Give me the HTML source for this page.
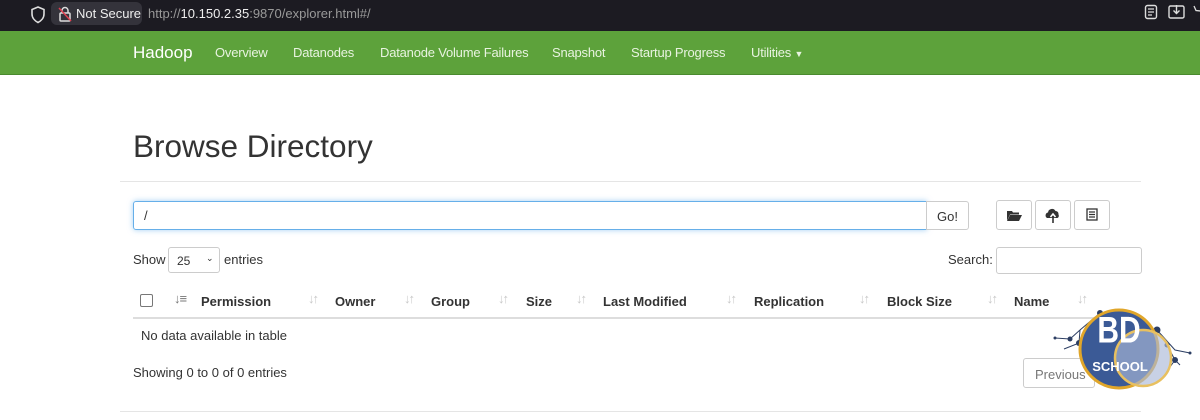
<!DOCTYPE html>
<html><head><style>
*{box-sizing:border-box;margin:0;padding:0}
body{width:1200px;height:420px;overflow:hidden;background:#fff;font-family:"Liberation Sans",Arial,sans-serif;font-size:13px;color:#333;position:relative}
.abs{position:absolute}
.bar{left:0;top:0;width:1200px;height:31px;background:#1c1b22}
.nav{left:0;top:31px;width:1200px;height:44px;background:#5da23b;border-bottom:1px solid #4a8a2e}
.nav span{position:absolute;top:14px;color:#e8f3e0;font-size:13px;letter-spacing:-0.2px}
.btn{border:1px solid #ccc;border-radius:3px;background:#fff}
.h{font-weight:bold;top:294px;font-size:13px;color:#333}
.s{top:291px;color:#c8c8c8;font-size:13px;font-weight:bold;letter-spacing:-2px}
</style></head><body>
<div class="abs bar"></div>
<svg class="abs" style="left:30px;top:6px" width="16" height="18" viewBox="0 0 16 18"><path d="M8 1 L14 3.5 V8 C14 12 11 15 8 16.5 C5 15 2 12 2 8 V3.5Z" fill="none" stroke="#ddd" stroke-width="1.6"/></svg>
<div class="abs" style="left:51px;top:2px;width:91px;height:23px;background:#34333b;border-radius:6px"></div>
<svg class="abs" style="left:58px;top:6px" width="14" height="16" viewBox="0 0 14 16"><rect x="2" y="7" width="10" height="8" rx="1" fill="none" stroke="#ddd" stroke-width="1.5"/><path d="M4 7V4.5a3 3 0 0 1 6 0V7" fill="none" stroke="#ddd" stroke-width="1.5"/><path d="M1 2 L13 15" stroke="#e04050" stroke-width="1.5"/></svg>
<div class="abs" style="left:76px;top:6px;color:#eee;font-size:13px">Not Secure</div>
<div class="abs" style="left:148px;top:6px;color:#999;font-size:13px">http://<span style="color:#eee">10.150.2.35</span>:9870/explorer.html#/</div>
<svg class="abs" style="left:1144px;top:4px" width="56" height="16" viewBox="0 0 56 16"><rect x="1.5" y="1.5" width="11" height="13" rx="2" fill="none" stroke="#ddd" stroke-width="1.4"/><path d="M4 5h6M4 8h6M4 11h4" stroke="#ddd" stroke-width="1.2"/><rect x="25" y="2" width="15" height="12" rx="1.5" fill="none" stroke="#ddd" stroke-width="1.4"/><path d="M32.5 1v8M29.5 6.5l3 3 3-3" stroke="#ddd" stroke-width="1.4" fill="none"/><path d="M50 2l2 4.5 4.5.5" stroke="#ddd" stroke-width="1.3" fill="none"/></svg>
<div class="abs nav">
<span style="left:133px;top:12px;font-size:17px;color:#fff;letter-spacing:0">Hadoop</span>
<span style="left:215px">Overview</span>
<span style="left:293px">Datanodes</span>
<span style="left:380px">Datanode Volume Failures</span>
<span style="left:552px">Snapshot</span>
<span style="left:631px">Startup Progress</span>
<span style="left:751px">Utilities <span style="position:static;font-size:9px">▼</span></span>
</div>
<div class="abs" style="left:133px;top:128px;font-size:31.5px;color:#333">Browse Directory</div>
<div class="abs" style="left:120px;top:181px;width:1021px;height:1px;background:#e5e5e5"></div>
<div class="abs" style="left:133px;top:201px;width:794px;height:29px;border:1px solid #66afe9;border-radius:3px 0 0 3px;box-shadow:0 0 6px rgba(102,175,233,.6);padding:6px 10px;font-size:13px">/</div>
<div class="abs btn" style="left:926px;top:201px;width:43px;height:29px;border-radius:0 3px 3px 0;padding:7px 10px">Go!</div>
<div class="abs btn" style="left:996px;top:200px;width:36px;height:30px"><svg width="34" height="28" viewBox="0 0 34 28"><path d="M10 10h5l1 1.5h6v2H13l-3 6z" fill="#333"/><path d="M13 14h12l-3 6H10z" fill="#333"/></svg></div>
<div class="abs btn" style="left:1035px;top:200px;width:36px;height:30px"><svg width="34" height="28" viewBox="0 0 34 28"><path d="M11 17a3 3 0 0 1 1-5.5 4 4 0 0 1 7.5-1.5 3 3 0 0 1 3 3.5 2.5 2.5 0 0 1-1 3.5z" fill="#333"/><path d="M14.5 16l2.5-3 2.5 3" stroke="#fff" stroke-width="1.6" fill="none"/><path d="M17 22v-7" stroke="#333" stroke-width="1.6"/></svg></div>
<div class="abs btn" style="left:1074px;top:200px;width:36px;height:30px"><svg width="34" height="28" viewBox="0 0 34 28"><rect x="12" y="8" width="10" height="11" fill="none" stroke="#333" stroke-width="1.3"/><path d="M14 11h6M14 13.5h6M14 16h6" stroke="#333" stroke-width="1.2"/></svg></div>
<div class="abs" style="left:133px;top:252px">Show</div>
<div class="abs" style="left:168px;top:247px;width:52px;height:26px;border:1px solid #ccc;border-radius:3px;font-size:12px;padding:6px 8px">25<span style="position:absolute;left:37px;top:5px;font-size:9px">⌄</span></div>
<div class="abs" style="left:224px;top:252px">entries</div>
<div class="abs" style="left:948px;top:252px">Search:</div>
<div class="abs" style="left:996px;top:247px;width:146px;height:27px;border:1px solid #ccc;border-radius:3px"></div>
<div class="abs" style="left:140px;top:294px;width:13px;height:13px;border:1px solid #777;border-radius:2px"></div>
<div class="abs" style="left:174px;top:291px;color:#777;font-size:13px;font-weight:bold;letter-spacing:-1px">↓≡</div>
<div class="abs h" style="left:201px">Permission</div><div class="abs s" style="left:308px">↓↑</div>
<div class="abs h" style="left:335px">Owner</div><div class="abs s" style="left:404px">↓↑</div>
<div class="abs h" style="left:431px">Group</div><div class="abs s" style="left:498px">↓↑</div>
<div class="abs h" style="left:526px">Size</div><div class="abs s" style="left:576px">↓↑</div>
<div class="abs h" style="left:603px">Last Modified</div><div class="abs s" style="left:726px">↓↑</div>
<div class="abs h" style="left:754px">Replication</div><div class="abs s" style="left:859px">↓↑</div>
<div class="abs h" style="left:887px">Block Size</div><div class="abs s" style="left:987px">↓↑</div>
<div class="abs h" style="left:1014px">Name</div><div class="abs s" style="left:1077px">↓↑</div>
<div class="abs" style="left:133px;top:317px;width:1008px;height:2px;background:#ddd"></div>
<div class="abs" style="left:141px;top:328px">No data available in table</div>
<div class="abs" style="left:133px;top:365px">Showing 0 to 0 of 0 entries</div>
<div class="abs btn" style="left:1023px;top:358px;width:72px;height:30px;color:#777;padding:8px 11px">Previous</div>
<div class="abs" style="left:120px;top:411px;width:1021px;height:1px;background:#e5e5e5"></div>
<svg class="abs" style="left:1050px;top:305px" width="150" height="90" viewBox="0 0 150 90">
<g stroke="#2c3e63" stroke-width="1" fill="none">
<path d="M5 33 L20 34 L30 25 L50 8 M14 44 L29 38 L32 50 M29 38 L30 25 M107 25 L125 45 L140 48 M118 42 L125 55 L120 62 M125 55 L130 60"/>
</g>
<g fill="#2c3e63">
<circle cx="20" cy="34" r="2.5"/><circle cx="29" cy="38" r="3"/><circle cx="50" cy="8" r="3"/><circle cx="107" cy="25" r="3.5"/><circle cx="125" cy="55" r="3"/><circle cx="117" cy="40" r="2.5"/><circle cx="140" cy="48" r="1.5"/><circle cx="5" cy="33" r="1.5"/>
</g>
<circle cx="69" cy="44" r="39" fill="#3b5a96" stroke="#e0a62a" stroke-width="3"/>
<circle cx="93" cy="53" r="28" fill="rgba(170,185,215,.65)" stroke="#e8c060" stroke-width="2.5"/>
<text x="69" y="30" text-anchor="middle" fill="#fff" font-family="Liberation Sans" font-weight="bold" font-size="30" transform="scale(1,1.25)">BD</text>
<text x="70" y="66" text-anchor="middle" fill="#fff" font-family="Liberation Sans" font-size="13" font-weight="bold">SCHOOL</text>
</svg>
</body></html>
